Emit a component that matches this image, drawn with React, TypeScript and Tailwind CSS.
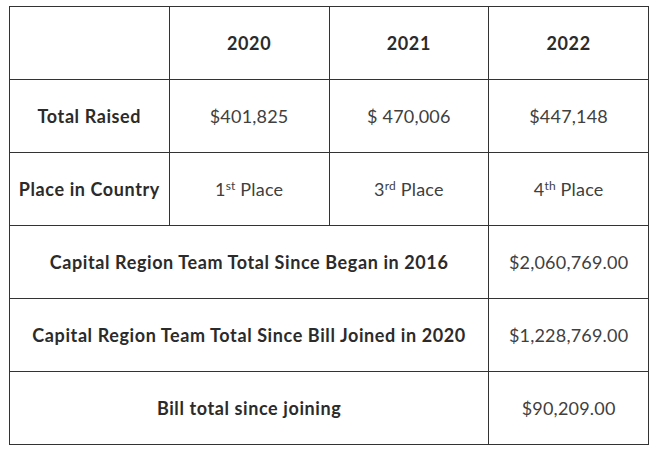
import React from 'react'

const years = ['2020', '2021', '2022']

const cell = 'border border-[#333333] text-center align-middle h-[73px] px-1'
const head = 'font-bold text-[#2b2b2b] tracking-[0.6px]'

export default function App() {
  return (
    <div
      className="w-[657px] h-[454px] bg-white pt-[6px] pl-[9px]"
      style={{ fontFamily: 'Lato, "Open Sans", sans-serif' }}
    >
      <table className="border-collapse w-[640px] table-fixed text-[18px] text-[#404040] tracking-[0.2px]">
        <tbody>
          {/* Header */}
          <tr>
            <td className={cell}></td>
            {years.map((y) => (
              <td key={y} className={`${cell} ${head}`}>
                {y}
              </td>
            ))}
          </tr>

          <tr>
            <td className={`${cell} ${head}`}>Total Raised</td>
            <td className={cell}>$401,825</td>
            <td className={cell}>$ 470,006</td>
            <td className={cell}>$447,148</td>
          </tr>

          <tr>
            <td className={`${cell} ${head} px-0 tracking-[0.3px]`}>Place in Country</td>
            <td className={cell}>
              1<sup className="text-[12px]">st</sup> Place
            </td>
            <td className={cell}>
              3<sup className="text-[12px]">rd</sup> Place
            </td>
            <td className={cell}>
              4<sup className="text-[12px]">th</sup> Place
            </td>
          </tr>

          {/* Totals */}
          <tr>
            <td colSpan={3} className={`${cell} ${head}`}>
              Capital Region Team Total Since Began in 2016
            </td>
            <td className={cell}>$2,060,769.00</td>
          </tr>
          <tr>
            <td colSpan={3} className={`${cell} ${head}`}>
              Capital Region Team Total Since Bill Joined in 2020
            </td>
            <td className={cell}>$1,228,769.00</td>
          </tr>
          <tr>
            <td colSpan={3} className={`${cell} ${head}`}>
              Bill total since joining
            </td>
            <td className={cell}>$90,209.00</td>
          </tr>
        </tbody>
      </table>
    </div>
  )
}
